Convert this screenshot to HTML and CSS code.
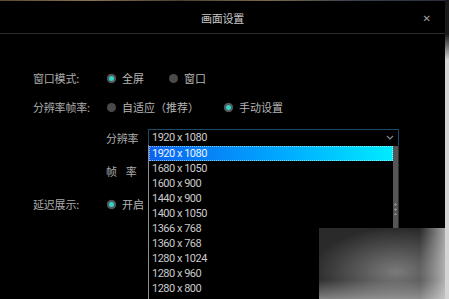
FILE: index.html
```html
<!DOCTYPE html>
<html lang="zh-CN">
<head>
  <meta charset="UTF-8">
  <title>画面设置</title>
  <meta name="viewport" content="width=device-width,initial-scale=1">
  <link rel="stylesheet" href="styles.css">
</head>
<body>
  <div class="dialog">
    <div class="topstrip"></div>
    <div class="header">
      <span></span>
      <span class="title">画面设置</span>
      <span class="close">&#x2715;</span>
    </div>

    <div class="form">
      <div class="row r1">
        <span class="label">窗口模式:</span>
        <div class="options">
          <label class="opt"><span class="radio on"></span>全屏</label>
          <label class="opt"><span class="radio"></span>窗口</label>
        </div>
      </div>
      <div class="row r2">
        <span class="label">分辨率帧率:</span>
        <div class="options">
          <label class="opt"><span class="radio"></span>自适应（推荐）</label>
          <label class="opt"><span class="radio on"></span>手动设置</label>
        </div>
      </div>
      <div class="row sub r3">
        <span class="sublabel">分辨率</span>
        <div class="select">
          <span class="value">1920 x 1080</span>
          <svg class="chev" width="8" height="5" viewBox="0 0 8 5"><path d="M1 1 L4 4 L7 1" fill="none" stroke="#8a8a8a" stroke-width="1.2"/></svg>
          <div class="list">
            <ul class="items">
              <li class="sel">1920 x 1080</li>
              <li>1680 x 1050</li>
              <li>1600 x 900</li>
              <li>1440 x 900</li>
              <li>1400 x 1050</li>
              <li>1366 x 768</li>
              <li>1360 x 768</li>
              <li>1280 x 1024</li>
              <li>1280 x 960</li>
              <li>1280 x 800</li>
            </ul>
            <div class="scroll"><span class="grip"></span></div>
          </div>
        </div>
      </div>
      <div class="row sub r4">
        <span class="sublabel spaced">帧<i></i>率</span>
      </div>
      <div class="row r5">
        <span class="label">延迟展示:</span>
        <div class="options">
          <label class="opt"><span class="radio on"></span>开启</label>
        </div>
      </div>
    </div>

    <div class="mark"></div>
  </div>
</body>
</html>
```

FILE: styles.css
```css
body { margin: 0; background: linear-gradient(#1a1a1a 0, #1a1a1a 34px, #d4d4d4 60px); font-family: "Noto Sans CJK SC", sans-serif; overflow: hidden;}
.dialog { width: 445px; height: 299px; background: #000; position: relative; overflow: hidden;}
.topstrip { height: 1px; background: linear-gradient(90deg, #5a4a30, #8a7450 20%, #4a4030 40%, #7a6a48 60%, #3a4050 80%, #2a2f3a);}
.header { height: 33px; border-bottom: 1px solid #2c2c2c; display: grid; grid-template-columns: 1fr auto 1fr; align-items: center; padding-top: 2px; box-sizing: border-box;}
.title { color: #c8c8c8; font-size: 11px; letter-spacing: -0.2px;}
.close { justify-self: end; margin-right: 14px; color: #a0a0a0; font-size: 10px; font-family: "DejaVu Sans", sans-serif;}

.form { display: flex; flex-direction: column; padding: 34px 0 0 33px;}
.row { display: flex; align-items: center; height: 20px; color: #ababab; font-size: 11px;}
.r2 { margin-top: 9px;}
.r3 { margin-top: 12px; height: 17px;}
.r4 { margin-top: 15px;}
.r5 { margin-top: 13px;}
.label { width: 74px; letter-spacing: -0.2px;}
.sub { padding-left: 73px;}
.sublabel { width: 42px; letter-spacing: -0.2px;}
.spaced i { display: inline-block; width: 9px;}
.options { display: flex; gap: 25px;}
.opt { display: flex; align-items: center; gap: 6px; color: #b5b5b5;}
.radio { width: 9px; height: 9px; border-radius: 50%; background: #4a4a4a; box-sizing: border-box;}
.radio.on { background: #2fd6c8; border: 2px solid #505a5c; box-shadow: 0 0 1px #6a3a3a;}

.select { position: relative; width: 251px; height: 17px; box-sizing: border-box; border: 1px solid #1e4a69; background: #000;
  display: flex; align-items: center; justify-content: space-between; padding: 0 4px 0 3px;
  font-family: Roboto, sans-serif; font-size: 11px; letter-spacing: -0.5px; color: #cdcdcd;}
.list { position: absolute; top: 100%; left: -1px; width: 251px; height: 160px; display: flex; background: #000;
  border-left: 1px solid #8c8c8c; border-right: 1px solid #2a2f36; box-sizing: border-box; padding-top: 1px;}
.items { list-style: none; margin: 0; padding: 0; flex: 1;}
.items li { height: 15px; line-height: 15px; padding-left: 3px; color: #cacaca;}
.items li.sel { background: linear-gradient(90deg, #0b62f0, #00aaff 55%, #00ecff); color: #e8f4ff; outline: 1px dotted rgba(255,255,255,.55); outline-offset: -1px;}
.scroll { width: 5px; background: #555; position: relative;}
.grip { position: absolute; left: 1px; top: 56px; width: 3px; height: 13px;
  background: radial-gradient(circle, #8a8a8a 1px, transparent 1.3px) 0 0 / 3px 5px repeat-y;}

.mark { position: absolute; left: 319px; top: 228px; width: 140px; height: 80px;
  background:
    linear-gradient(to right, transparent 72%, rgba(225,225,225,.9) 96%),
    linear-gradient(to bottom, transparent 65%, rgba(205,205,205,.8) 100%),
    radial-gradient(ellipse 60% 55% at 55% 55%, #7a7a7a, #3a3a3a 80%, #2a2a2a);}
```
